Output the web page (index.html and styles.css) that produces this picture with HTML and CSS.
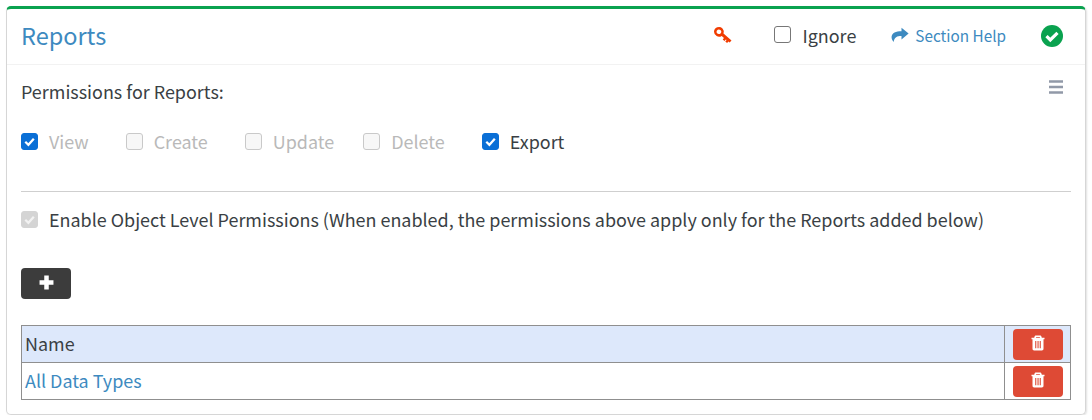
FILE: index.html
```html
<!DOCTYPE html>
<html lang="en">
<head>
    <meta charset="UTF-8">
    <title>Reports</title>
    <link rel="stylesheet" href="styles.css">
</head>
<body>
    <div class="card">
        <div class="card-header">
            <h2 class="card-title">Reports</h2>
            <svg class="key-icon" viewBox="0 0 20 20" width="20" height="20">
                <path d="M1 5.800a5 5 0 0 1 8.500-3.400 5 5 0 0 1 1 5l8 7-1.900 2.200-1.200-1-1.300 1.500-1.800-1.500 1.300-1.500-.8-.7-1.300 1.500-1.800-1.500 1.300-1.500-2.300-2a5 5 0 0 1-7.700-4.100zm2.500.1a2.400 2.400 0 0 0 4 1.500 2.400 2.400 0 0 0-.2-3.500 2.400 2.400 0 0 0-3.800 2z" fill="#f13c00"/>
            </svg>
            <label class="ignore"><span class="box"></span>Ignore</label>
            <a class="help" href="#">
                <svg viewBox="0 0 18 16" width="18" height="16">
                    <path d="M10.500 0.800 17.600 6.600 10.500 12.400V8.900C6 8.900 3.400 10 2.600 15 1 13.200 0.400 11.400 0.600 9.600 1 6 4.800 4.200 10.500 4.200z" fill="#3d8ac0"/>
                </svg>
                Section Help
            </a>
            <svg class="ok-icon" viewBox="0 0 22 22" width="22" height="22">
                <circle cx="11" cy="11" r="11" fill="#0aa24f"/>
                <path d="M5.500 11.200 9.300 15 16.500 7.800" fill="none" stroke="#fff" stroke-width="3.200"/>
            </svg>
        </div>
        <div class="card-body">
            <div class="perm-top">
                <p class="perm-title">Permissions for Reports:</p>
                <svg class="menu-icon" viewBox="0 0 16 14" width="16" height="14">
                    <path d="M1 1.500h14M1 7h14M1 12.500h14" stroke="#9199a8" stroke-width="2.400"/>
                </svg>
            </div>
            <div class="perm-row">
                <label class="perm off"><span class="box checked"><svg viewBox="0 0 16 16"><path d="M3.500 8.300 6.800 11.500 12.600 5" fill="none" stroke="#fff" stroke-width="2.400"/></svg></span>View</label>
                <label class="perm off"><span class="box disabled"></span>Create</label>
                <label class="perm off update"><span class="box disabled"></span>Update</label>
                <label class="perm off"><span class="box disabled"></span>Delete</label>
                <label class="perm"><span class="box checked"><svg viewBox="0 0 16 16"><path d="M3.500 8.300 6.800 11.500 12.600 5" fill="none" stroke="#fff" stroke-width="2.400"/></svg></span>Export</label>
            </div>
            <hr class="divider">
            <label class="object-level"><span class="box grey"><svg viewBox="0 0 16 16"><path d="M3.500 8.300 6.800 11.500 12.600 5" fill="none" stroke="#f2f2f2" stroke-width="2.400"/></svg></span>Enable Object Level Permissions (When enabled, the permissions above apply only for the Reports added below)</label>
            <button class="add-btn">
                <svg viewBox="0 0 14 14" width="15" height="15"><path d="M7 .5v13M.5 7h13" stroke="#fff" stroke-width="4.200"/></svg>
            </button>
            <table class="items">
                <tr class="head">
                    <td>Name</td>
                    <td class="action"><button class="del-btn"><svg viewBox="0 0 14 16" width="14" height="16"><use href="#trash"/></svg></button></td>
                </tr>
                <tr>
                    <td><a href="#">All Data Types</a></td>
                    <td class="action"><button class="del-btn"><svg viewBox="0 0 14 16" width="14" height="16"><use href="#trash"/></svg></button></td>
                </tr>
            </table>
        </div>
    </div>
    <svg class="defs" width="0" height="0">
        <symbol id="trash" viewBox="0 0 14 16">
            <path fill-rule="evenodd" fill="#fff" d="M5 0.500h4c.8 0 1.300.5 1.500 1.200l.3 1h2.700v1.600h-1v9.500c0 1-.7 1.700-1.600 1.700H3.100c-.9 0-1.600-.7-1.600-1.700V4.300h-1V2.700h2.700l.3-1C3.700 1 4.200.5 5 .5zM5 2.700h4l-.2-.7H5.200zM4.200 6v7.200h1.100V6zM6.500 6v7.200h1.100V6zM8.700 6v7.200h1.100V6z"/>
        </symbol>
    </svg>
</body>
</html>
```

FILE: styles.css
```css
body {
    margin: 0;
    padding: 6px 6px 0;
    background-color: #fff;
    font-family: "Noto Sans CJK SC", "Noto Sans", sans-serif;
    font-size: 17.96px;
    color: #3a3f44;
}
.card {
    height: 409px;
    box-sizing: border-box;
    border: 1px solid #d6d6d6;
    border-top: 3px solid #0aa24f;
    border-radius: 5px;
    box-shadow: 1px 1px 2px rgba(0, 0, 0, 0.12);
}
.card-header {
    display: flex;
    align-items: center;
    height: 51px;
    padding: 0 22px 4px 14px;
    border-bottom: 1px solid #f2f2f2;
}
.card-title {
    margin: 0 auto 0 0;
    font-size: 23.5px;
    font-weight: 400;
    line-height: 32px;
    color: #3d8ac0;
}
.key-icon {
    margin: 2px 41px 0 0;
}
.ok-icon {
    margin-top: 2px;
}
.box {
    display: inline-block;
    box-sizing: border-box;
    width: 17px;
    height: 17px;
    border: 1px solid #777;
    border-radius: 3px;
    flex: none;
}
.box svg {
    display: block;
    width: 100%;
    height: 100%;
}
.box.checked {
    background-color: #0a6fd6;
    border-color: #0a6fd6;
}
.box.disabled {
    background-color: #f7f7f7;
    border-color: #c9c9c9;
}
.box.grey {
    background-color: #d4d4d4;
    border-color: #d4d4d4;
}
.ignore {
    display: flex;
    align-items: center;
    gap: 11px;
    margin-right: 35px;
    line-height: 26px;
}
.help {
    display: flex;
    align-items: center;
    gap: 6px;
    margin-right: 35px;
    font-size: 15.3px;
    color: #3d8ac0;
    text-decoration: none;
}
.card-body {
    padding: 0 14px;
}
.perm-top {
    display: flex;
    justify-content: space-between;
    align-items: flex-start;
    padding: 13px 7px 0 0;
}
.perm-title {
    margin: 0;
    line-height: 26px;
}
.menu-icon {
    margin-top: 2px;
}
.perm-row {
    display: flex;
    margin-top: 24px;
    height: 26px;
}
.perm {
    display: flex;
    align-items: center;
    gap: 11px;
    margin-right: 37px;
    line-height: 26px;
}
.perm.update {
    margin-right: 29px;
}
.perm.off {
    color: #b9b9b9;
}
.divider {
    margin: 37px 0 0;
    border: 0;
    border-top: 1px solid #cfcfcf;
}
.object-level {
    display: flex;
    align-items: center;
    gap: 11px;
    margin-top: 14px;
    line-height: 26px;
}
.add-btn {
    display: flex;
    align-items: center;
    justify-content: center;
    width: 50px;
    height: 31px;
    margin-top: 36px;
    padding: 0 0 3px;
    background-color: #3c3c3c;
    border: 0;
    border-radius: 4px;
}
.items {
    width: 100%;
    margin-top: 26px;
    border-collapse: collapse;
}
.items td {
    height: 37px;
    box-sizing: border-box;
    padding: 0 3px 3px;
    border: 1px solid #8f8f8f;
    line-height: 26px;
}
.items .head {
    background-color: #dde8fb;
}
.items a {
    color: #3d8ac0;
    text-decoration: none;
}
.items .action {
    width: 66px;
    padding: 0 0 0 1px;
}
.del-btn {
    display: flex;
    align-items: center;
    justify-content: center;
    width: 50px;
    height: 31px;
    margin-left: 7px;
    padding: 0 0 3px;
    background-color: #de4a35;
    border: 0;
    border-radius: 4px;
}
.defs {
    position: absolute;
}
```
